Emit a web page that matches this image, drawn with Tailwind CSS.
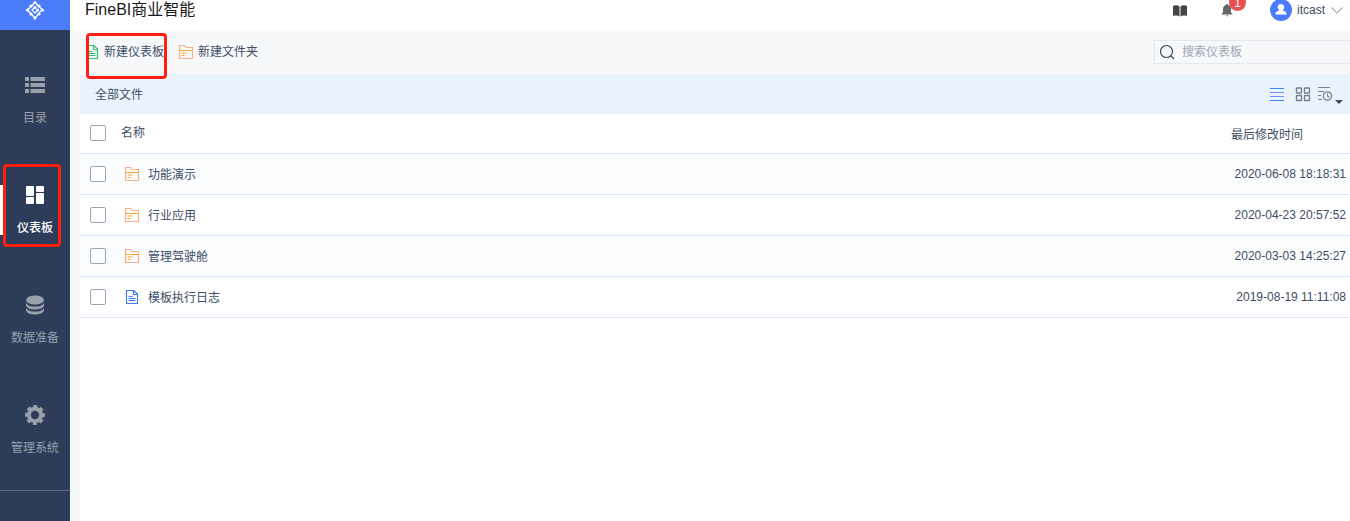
<!DOCTYPE html>
<html lang="zh-CN">
<head>
    <meta charset="UTF-8">
    <meta name="viewport" content="width=device-width, initial-scale=1.0">
    <title>FineBI商业智能</title>
    <script src="https://cdn.jsdelivr.net/npm/@tailwindcss/browser@4"></script>
</head>
<body class="bg-white text-xs text-[#3d4d66] font-['Liberation_Sans','Noto_Sans_CJK_SC',sans-serif]">

    <!-- 公用图标 -->
    <svg class="hidden">
        <symbol id="icon-folder" viewBox="0 0 16 16">
            <path d="M1.500 14.500V1.500h5l1.500 2h6.500v11z" fill="none" stroke="#f9b08a" stroke-width="1.200" />
            <path d="M1.500 6.500h13M3.500 9h5M3.500 11.500h3" fill="none" stroke="#f5a52b" stroke-width="1.200" />
        </symbol>
        <symbol id="icon-file" viewBox="0 0 16 16">
            <path d="M2.500 1.500h7.500l3.500 3.500v9.500h-11zM9.500 1.500v4h4M4.500 7.500h4M4.500 9.500h7M4.500 11.500h7" fill="none" stroke="currentColor" stroke-width="1.200" />
        </symbol>
    </svg>

    <div class="flex min-h-screen">
        <!-- 侧边导航 -->
        <aside class="w-[70px] shrink-0 bg-[#2d3d59] text-[#98a0ac]">
            <div class="flex h-[30px] justify-center bg-[#4b7dfb]">
                <svg class="size-5" viewBox="0 0 20 20" fill="none" stroke="#fff">
                    <path d="M10 2.500L2.500 10l7.500 8M10 2.500l7.500 7.500M10 18l3-3.500" stroke-width="1.400" />
                    <path d="M10 7L7 10l3 3 3-3M14 13l3-3" stroke-width="1.200" />
                    <path d="M10 2.500h0M6 6h0M14 6h0M2.500 10h0M17.500 10h0M6 14h0M14 14h0M10 18h0M10 7.500h0M12.500 10h0" stroke-width="3.200" stroke-linecap="round" />
                </svg>
            </div>
            <nav>
                <a href="#" class="flex h-[110px] flex-col items-center gap-[13px] pt-[45px]">
                    <svg class="size-5" viewBox="0 0 20 20" fill="currentColor">
                        <path d="M0 2h4v4H0zM5.500 2H20v4H5.500zM0 8h4v4H0zM5.500 8H20v4H5.500zM0 14h4v4H0zM5.500 14H20v4H5.500z" />
                    </svg>
                    <span class="leading-5">目录</span>
                </a>
                <a href="#" class="relative flex h-[110px] flex-col items-center gap-[13px] pt-[45px] font-medium text-white">
                    <span class="absolute left-0 top-[45px] h-[50px] w-[3px] bg-white"></span>
                    <span class="absolute left-[3px] top-6 h-[83px] w-[58px] rounded-sm border-3 border-[#ff1f12]"></span>
                    <svg class="size-5" viewBox="0 0 20 20" fill="currentColor">
                        <rect x="1" y="1" width="8" height="10" rx="1" />
                        <rect x="11" y="1" width="8" height="6" rx="1" />
                        <rect x="1" y="12" width="8" height="7" rx="1" />
                        <rect x="11" y="8" width="8" height="11" rx="1" />
                    </svg>
                    <span class="leading-5">仪表板</span>
                </a>
                <a href="#" class="flex h-[110px] flex-col items-center gap-[13px] pt-[45px]">
                    <svg class="size-5" viewBox="0 0 20 20" fill="currentColor">
                        <ellipse cx="10" cy="5" rx="9" ry="4.500" />
                        <path d="M1 8c2 3 5 3.500 9 3.500S17 11 19 8v2.500c-1 3-5 4-9 4s-8-1-9-4z" />
                        <path d="M1 13c2 3 5 3.500 9 3.500s7-.5 9-3.500v2.500c-1 3-5 4-9 4s-8-1-9-4z" />
                    </svg>
                    <span class="leading-5">数据准备</span>
                </a>
                <a href="#" class="flex h-[110px] flex-col items-center gap-[13px] pt-[45px]">
                    <svg class="size-5" viewBox="0 0 20 20" fill="none" stroke="currentColor">
                        <circle cx="10" cy="10" r="6.200" stroke-width="4" />
                        <circle cx="10" cy="10" r="8.800" stroke-width="2.400" stroke-dasharray="4 2.911" stroke-dashoffset="2" />
                    </svg>
                    <span class="leading-5">管理系统</span>
                </a>
            </nav>
            <div class="mt-5 border-t border-[#5f6b80]"></div>
        </aside>

        <div class="flex min-w-0 flex-1 flex-col">
            <!-- 顶栏 -->
            <header class="flex h-[30px] justify-between pl-[15px] pr-[7px]">
                <h1 class="text-base leading-5 text-[#1a1a1a]">FineBI商业智能</h1>
                <div class="flex h-5 items-center">
                    <button aria-label="帮助">
                        <svg class="size-4" viewBox="0 0 16 16" fill="#444">
                            <path d="M1 4C3.500 3 6 3.200 7.500 4.500v10C6 13.500 3.500 13.300 1 14zM15 4C12.500 3 10 3.200 8.500 4.500v10c1.500-1 4-1.200 6.500-.5z" />
                        </svg>
                    </button>
                    <button class="relative ml-[31px]" aria-label="消息">
                        <svg class="size-4" viewBox="0 0 16 16" fill="#666">
                            <path d="M8 2c.8 0 1 .5 1 1 2 .5 3 2 3 4v3.500l1.500 1.500v.5h-11V12L4 10.500V7c0-2 1-3.500 3-4 0-.5.2-1 1-1zM6.500 13.500h3c0 1-3 1-3 0z" />
                        </svg>
                        <span class="absolute -top-2 left-2.5 flex size-[17px] items-center justify-center rounded-full bg-[#e9504f] leading-3 text-white">1</span>
                    </button>
                    <button class="ml-[35px] flex items-center">
                        <svg class="size-[22px]" viewBox="0 0 22 22">
                            <circle cx="11" cy="11" r="11" fill="#4b7dfb" />
                            <path d="M11 5a3.200 3.200 0 0 1 2 5.800c0 .8.500 1 1.500 1.400 1.500.6 2 1.300 2 3.300h-11c0-2 .5-2.700 2-3.300 1-.4 1.500-.6 1.500-1.400A3.200 3.200 0 0 1 11 5z" fill="#fff" />
                        </svg>
                        <span class="ml-[5px] mr-1.5">itcast</span>
                        <svg class="h-2 w-3" viewBox="0 0 12 8" fill="none" stroke="#a9afb8" stroke-width="1.200"><path d="M.5 1.500L6 7l5.500-5.500" /></svg>
                    </button>
                </div>
            </header>

            <div class="flex flex-1 flex-col bg-[#f7f8fa] pl-2.5">
                <!-- 工具栏 -->
                <div class="flex h-11 items-center justify-between">
                    <div class="flex gap-3.5">
                        <button class="relative flex items-center gap-1 pl-1">
                            <svg class="size-4 text-[#2fc56d]"><use href="#icon-file" /></svg>
                            <span class="leading-5">新建仪表板</span>
                            <span class="absolute -top-[9px] left-1.5 h-[46px] w-[81px] rounded-sm border-3 border-[#ff1f12]"></span>
                        </button>
                        <button class="flex items-center gap-1">
                            <svg class="size-4"><use href="#icon-folder" /></svg>
                            <span class="leading-5">新建文件夹</span>
                        </button>
                    </div>
                    <label class="flex h-6 w-[196px] items-center gap-1.5 border border-r-0 border-[#e4e7eb] pl-1">
                        <svg class="size-4 shrink-0" viewBox="0 0 16 16" fill="none" stroke="#3d4d66" stroke-width="1.200">
                            <circle cx="7.500" cy="7.500" r="6" /><path d="M12 12l3 3" />
                        </svg>
                        <input type="text" placeholder="搜索仪表板" aria-label="搜索仪表板" class="w-full min-w-0 pl-px outline-none placeholder:text-[#9ea5b1]">
                    </label>
                </div>

                <!-- 路径与视图切换 -->
                <div class="flex h-10 items-center justify-between bg-[#eaf2fe] pl-[15px] pr-[7px]">
                    <a href="#" class="pt-0.5">全部文件</a>
                    <div class="flex items-center">
                        <button aria-label="列表视图">
                            <svg class="size-4" viewBox="0 0 16 16" fill="none">
                                <path d="M1 2.500h14M1 14.500h14" stroke="#3d84f5" /><path d="M1 6.500h14M1 10.500h14" stroke="#6f93f4" />
                            </svg>
                        </button>
                        <button class="ml-2.5" aria-label="网格视图">
                            <svg class="size-4" viewBox="0 0 16 16" fill="none" stroke="#75808f" stroke-width="1.400">
                                <rect x="1.500" y="2" width="5" height="5" rx=".5" /><rect x="9.500" y="2" width="5" height="5" rx=".5" />
                                <rect x="1.500" y="9.500" width="5" height="5" rx=".5" /><rect x="9.500" y="9.500" width="5" height="5" rx=".5" />
                            </svg>
                        </button>
                        <button class="ml-1.5 flex items-end gap-0.5" aria-label="排序">
                            <svg class="size-4" viewBox="0 0 16 16" fill="none" stroke="#75808f" stroke-width="1.200">
                                <path d="M1 1.500h12M1 5.500h6M1 9.500h3M1 13.500h4" /><circle cx="10.500" cy="10" r="4.200" /><path d="M10.500 7.500V10l2 1.500" />
                            </svg>
                            <svg class="-mb-0.5 h-1 w-2" viewBox="0 0 8 4" fill="#3d4d66"><path d="M0 0h8L4 4z" /></svg>
                        </button>
                    </div>
                </div>

                <!-- 文件列表 -->
                <div class="flex-1 bg-white">
                    <table class="w-full table-fixed border-collapse text-left">
                        <thead>
                            <tr class="h-[39px] border-b border-[#d8e6f8]">
                                <th class="w-[41px] pl-2.5"><input type="checkbox" aria-label="全选" class="block size-4 appearance-none rounded-xs border border-[#9aa5b5] bg-white"></th>
                                <th class="font-normal">名称</th>
                                <th class="w-[119px] pt-1 font-normal">最后修改时间</th>
                            </tr>
                        </thead>
                        <tbody>
                            <tr class="h-[41px] border-b border-[#d8e6f8] bg-[#fbfcfe]">
                                <td class="pl-2.5"><input type="checkbox" aria-label="功能演示" class="block size-4 appearance-none rounded-xs border border-[#9aa5b5] bg-white"></td>
                                <td><a href="#" class="flex items-center gap-2 pl-[3px]"><svg class="size-4"><use href="#icon-folder" /></svg><span class="pt-0.5">功能演示</span></a></td>
                                <td class="pr-1 text-right">2020-06-08 18:18:31</td>
                            </tr>
                            <tr class="h-[41px] border-b border-[#d8e6f8]">
                                <td class="pl-2.5"><input type="checkbox" aria-label="行业应用" class="block size-4 appearance-none rounded-xs border border-[#9aa5b5] bg-white"></td>
                                <td><a href="#" class="flex items-center gap-2 pl-[3px]"><svg class="size-4"><use href="#icon-folder" /></svg><span class="pt-0.5">行业应用</span></a></td>
                                <td class="pr-1 text-right">2020-04-23 20:57:52</td>
                            </tr>
                            <tr class="h-[41px] border-b border-[#d8e6f8] bg-[#fbfcfe]">
                                <td class="pl-2.5"><input type="checkbox" aria-label="管理驾驶舱" class="block size-4 appearance-none rounded-xs border border-[#9aa5b5] bg-white"></td>
                                <td><a href="#" class="flex items-center gap-2 pl-[3px]"><svg class="size-4"><use href="#icon-folder" /></svg><span class="pt-0.5">管理驾驶舱</span></a></td>
                                <td class="pr-1 text-right">2020-03-03 14:25:27</td>
                            </tr>
                            <tr class="h-[41px] border-b border-[#d8e6f8]">
                                <td class="pl-2.5"><input type="checkbox" aria-label="模板执行日志" class="block size-4 appearance-none rounded-xs border border-[#9aa5b5] bg-white"></td>
                                <td><a href="#" class="flex items-center gap-2 pl-[3px]"><svg class="size-4 text-[#3d7df5]"><use href="#icon-file" /></svg><span class="pt-0.5">模板执行日志</span></a></td>
                                <td class="pr-1 text-right">2019-08-19 11:11:08</td>
                            </tr>
                        </tbody>
                    </table>
                </div>
            </div>
        </div>
    </div>

</body>
</html>
